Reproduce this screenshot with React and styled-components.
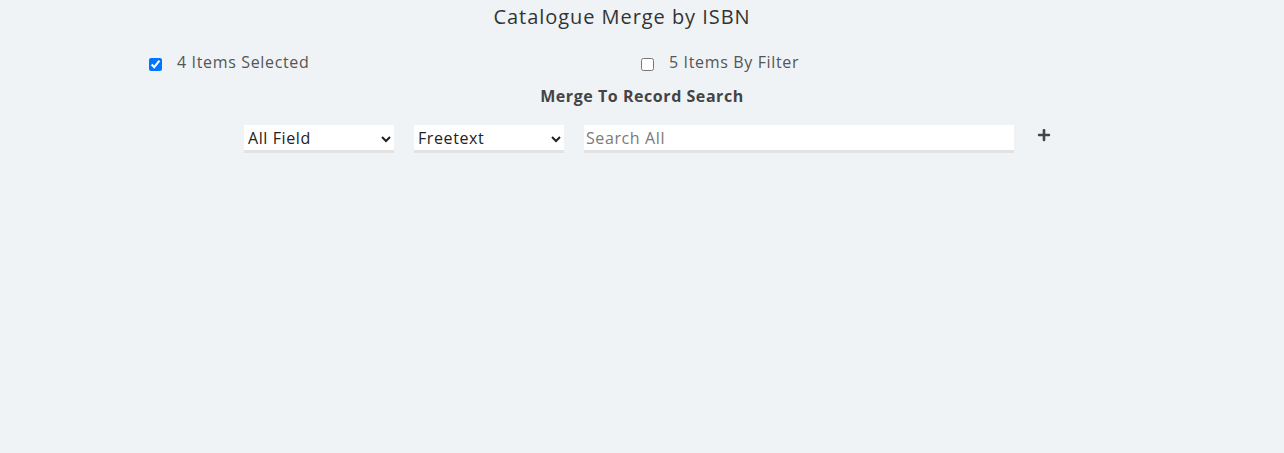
import React, { useState } from "react";
import styled, { createGlobalStyle } from "styled-components";
import { FaPlus } from "react-icons/fa";

const GlobalStyle = createGlobalStyle`
  body {
    margin: 0;
    background: #eff3f6;
    font-family: "Open Sans", "Liberation Sans", sans-serif;
  }
`;

const Page = styled.div`
  min-height: 453px;
  display: flex;
  flex-direction: column;
`;

const Title = styled.h1`
  margin: 0;
  padding-right: 40px;
  font-size: 20px;
  font-weight: 400;
  letter-spacing: 0.95px;
  line-height: 34px;
  text-align: center;
  color: #333;
`;

const OptionRow = styled.div`
  width: 986px;
  margin: 14px auto 0;
  display: grid;
  grid-template-columns: 492px 1fr;
  height: 28px;
`;

const Option = styled.label`
  display: flex;
  align-items: center;
  gap: 15px;
  font-size: 16px;
  letter-spacing: 0.65px;
  color: #555;
`;

const Check = styled.input`
  margin: 4px 0 0;
  width: 13px;
  height: 13px;
`;

const Heading = styled.h2`
  margin: 10px 0 0;
  font-size: 16px;
  font-weight: 700;
  letter-spacing: 0.55px;
  line-height: 20px;
  text-align: center;
  color: #444;
`;

const SearchRow = styled.div`
  margin-top: 19px;
  padding-left: 11px;
  display: flex;
  justify-content: center;
  align-items: flex-start;
  gap: 20px;
`;

const Select = styled.select`
  width: 150px;
  height: 28px;
  border: none;
  border-bottom: 3px solid #e2e2e2;
  border-radius: 0;
  background: #fff;
  padding: 0;
  font-family: inherit;
  font-size: 16px;
  letter-spacing: 0.6px;
  color: #222;
  outline: none;
`;

const Search = styled.input`
  width: 430px;
  height: 28px;
  box-sizing: border-box;
  border: none;
  border-bottom: 3px solid #e2e2e2;
  background: #fff;
  padding: 0 2px;
  font-family: inherit;
  font-size: 16px;
  letter-spacing: 0.6px;
  color: #222;
  outline: none;
  &::placeholder {
    color: #7a7a7a;
  }
`;

const AddButton = styled.button`
  margin-left: 3px;
  padding: 3px 0 0;
  border: none;
  background: none;
  color: #444;
  cursor: pointer;
  display: flex;
`;

const App = () => {
  const [selected, setSelected] = useState(true);
  const [byFilter, setByFilter] = useState(false);

  return (
    <Page>
      <GlobalStyle />
      <Title>Catalogue Merge by ISBN</Title>
      <OptionRow>
        <Option>
          <Check type="checkbox" checked={selected} onChange={() => setSelected(!selected)} />
          4 Items Selected
        </Option>
        <Option>
          <Check type="checkbox" checked={byFilter} onChange={() => setByFilter(!byFilter)} />
          5 Items By Filter
        </Option>
      </OptionRow>
      <Heading>Merge To Record Search</Heading>
      <SearchRow>
        <Select defaultValue="all">
          <option value="all">All Field</option>
          <option value="title">Title</option>
          <option value="isbn">ISBN</option>
        </Select>
        <Select defaultValue="free">
          <option value="free">Freetext</option>
          <option value="exact">Exact</option>
        </Select>
        <Search placeholder="Search All" />
        <AddButton>
          <FaPlus size={14} />
        </AddButton>
      </SearchRow>
    </Page>
  );
};

export default App;
